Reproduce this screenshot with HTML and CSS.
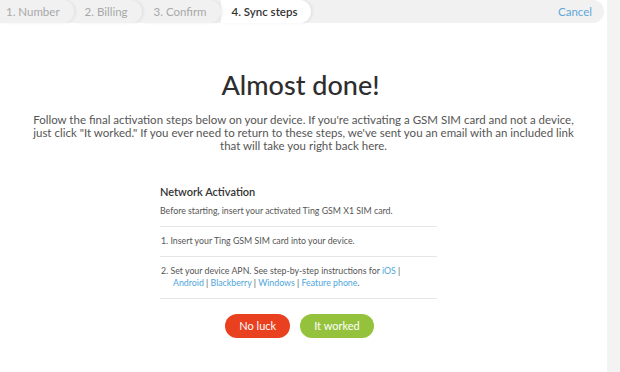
FILE: index.html
```html
<!DOCTYPE html>
<html lang="en">
<head>
  <meta charset="UTF-8">
  <title>Activate - Sync steps</title>
  <link rel="stylesheet" href="styles.css">
</head>
<body>

<div class="page">
  <div class="main">
    <div class="bar">
      <div class="steps">
        <div class="step s1">1. Number</div>
        <div class="step s2">2. Billing</div>
        <div class="step s3">3. Confirm</div>
        <div class="step s4 active">4. Sync steps</div>
      </div>
      <a class="cancel" href="#">Cancel</a>
    </div>

    <h1 class="title">Almost done!</h1>
    <p class="intro">Follow the final activation steps below on your device. If you're activating a GSM SIM card and not a device, just click "It worked." If you ever need to return to these steps, we've sent you an email with an included link that will take you right back here.</p>

    <div class="card">
      <h3>Network Activation</h3>
      <p class="note">Before starting, insert your activated Ting GSM X1 SIM card.</p>
      <ol class="list">
        <li>1. Insert your Ting GSM SIM card into your device.</li>
        <li>2. Set your device APN. See step-by-step instructions for <a href="#">iOS</a> |<br>
          <span class="links"><a href="#">Android</a> | <a href="#">Blackberry</a> | <a href="#">Windows</a> | <a href="#">Feature phone</a>.</span></li>
      </ol>
    </div>

    <div class="actions">
      <a class="btn red" href="#">No luck</a>
      <a class="btn green" href="#">It worked</a>
    </div>
  </div>
  <div class="gutter"></div>
</div>

</body>
</html>
```

FILE: styles.css
```css
body { margin: 0; font-family: Lato, "Open Sans", sans-serif; color: #333; background: #fff; }
a { text-decoration: none; }
.page { display: flex; height: 372px; overflow: hidden; }
.main { flex: 1; }
.gutter { width: 13px; background: #f3f3f3; }

.bar { display: flex; justify-content: space-between; align-items: center; height: 23px; background: #f1f1f1; border-radius: 0 12px 12px 0; margin-right: 3px; }
.steps { display: flex; height: 100%; }
.step { position: relative; display: flex; align-items: center; height: 100%; font-size: 11.5px; color: #a8a8a8; background: #f1f1f1; border-radius: 0 12px 12px 0; box-shadow: 2px 0 3px rgba(0,0,0,0.06); padding: 0 14px 0 11px; }
.s1 { z-index: 4; padding-left: 6px; }
.s2 { z-index: 3; }
.s3 { z-index: 2; padding-left: 12px; }
.s4 { z-index: 1; }
.step.active { background: #fff; color: #333; font-weight: 600; padding-right: 14px; }
.cancel { font-size: 11.5px; color: #5ea8d8; margin-right: 12px; }

.title { margin: 47px 0 0; text-align: center; font-size: 27px; font-weight: 500; color: #2e2e2e; line-height: 30px; padding-right: 6px; }
.intro { margin: 13px 24px 0; text-align: center; font-size: 11.5px; line-height: 13px; color: #555; }

.card { width: 277px; margin: 32px 0 0 160px; font-size: 8.8px; color: #555; }
.card h3 { margin: 0; font-size: 11px; font-weight: 600; color: #333; line-height: 16px; }
.note { margin: 5px 0 0; line-height: 12px; padding-bottom: 9px; border-bottom: 1px solid #e6e6e6; }
.list { list-style: none; margin: 0; padding: 0; }
.list li { padding: 8px 0 9px 1px; line-height: 12px; border-bottom: 1px solid #e6e6e6; }
.list a { color: #4ea6dc; }
.links { padding-left: 12px; }

.actions { display: flex; justify-content: center; gap: 10px; margin-top: 15px; margin-right: 8px; }
.btn { display: inline-block; font-size: 11px; color: #fff; border-radius: 12px; line-height: 24px; padding: 0 14px; }
.red { background: #e9401f; }
.green { background: #95c23c; }
```
